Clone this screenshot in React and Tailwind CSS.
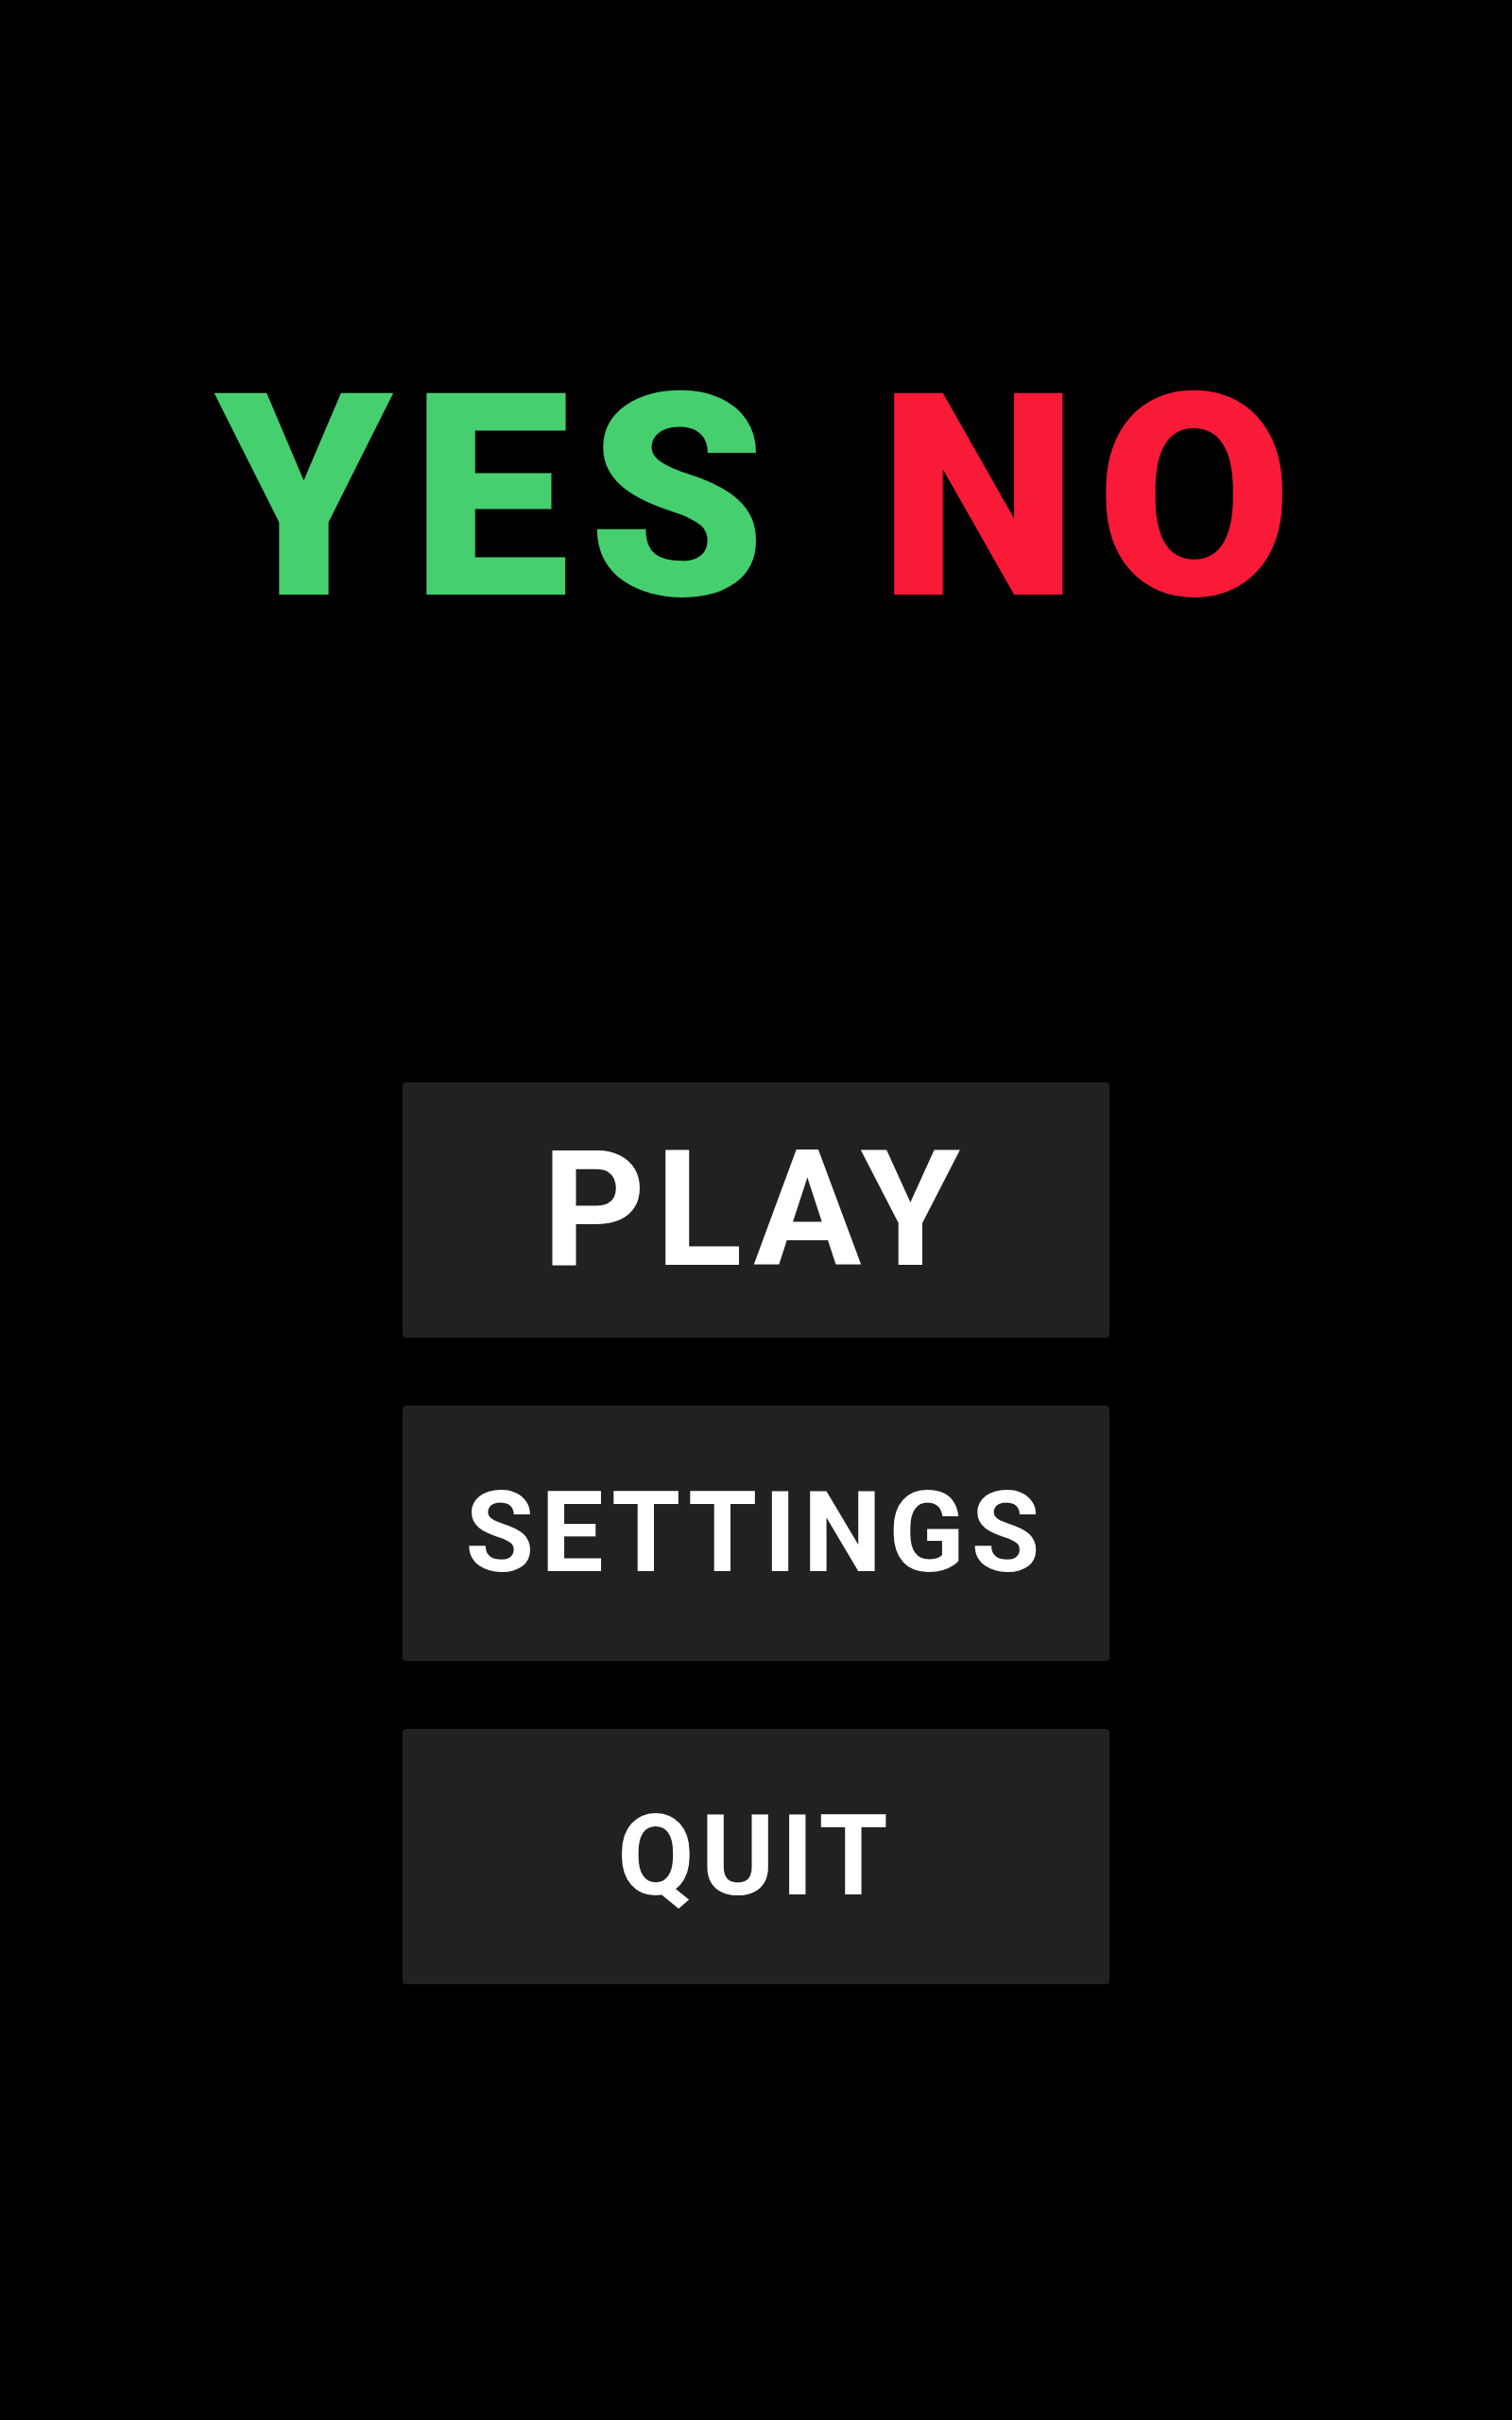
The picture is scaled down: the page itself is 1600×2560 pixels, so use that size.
import React from 'react';

const MenuButton = ({ label, size }) => (
  <button
    className={`flex items-center justify-center w-[748px] h-[270px] bg-[#212121] rounded-[4px] text-white font-bold leading-none ${size}`}
    style={{ fontFamily: 'Roboto, "Liberation Sans", sans-serif' }}
  >
    {label}
  </button>
);

const App = () => (
  <div className="min-h-[2560px] w-full bg-black flex flex-col items-center">
    <h1
      className="mt-[377px] pl-[14px] text-[300px] font-black leading-none tracking-[0.065em]"
      style={{ fontFamily: 'Roboto, "Liberation Sans", sans-serif' }}
    >
      <span className="text-[#46CF6E]">YES</span> <span className="ml-[6px] text-[#F91A38]">NO</span>
    </h1>
    <div className="mt-[468px] flex flex-col gap-[72px]">
      <MenuButton label="PLAY" size="text-[170px] tracking-[0.06em]" />
      <MenuButton label="SETTINGS" size="text-[118px] tracking-[0.06em]" />
      <MenuButton label="QUIT" size="text-[118px] tracking-[0.06em]" />
    </div>
  </div>
);

export default App;
